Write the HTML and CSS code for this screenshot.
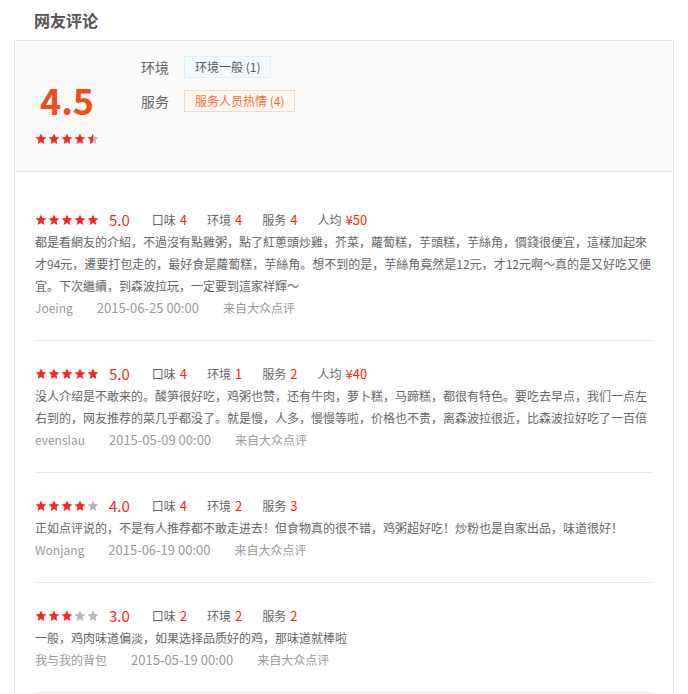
FILE: index.html
```html
<!DOCTYPE html>
<html>
<head>
    <meta charset="UTF-8">
    <title>网友评论</title>
    <link rel="stylesheet" href="styles.css">
</head>
<body>
<div class="comment">
    <h3 class="comment-title">网友评论</h3>
    <div class="comment-box">
        <div class="summary">
            <div class="score">
                <strong>4.5</strong>
                <div class="stars">
                    <svg viewBox="0 0 12 12"><path class="on" d="M6 .6l1.6 3.5 3.8.4-2.9 2.6.8 3.8L6 9 2.7 10.9l.8-3.8L.6 4.5l3.8-.4z"/></svg>
                    <svg viewBox="0 0 12 12"><path class="on" d="M6 .6l1.6 3.5 3.8.4-2.9 2.6.8 3.8L6 9 2.7 10.9l.8-3.8L.6 4.5l3.8-.4z"/></svg>
                    <svg viewBox="0 0 12 12"><path class="on" d="M6 .6l1.6 3.5 3.8.4-2.9 2.6.8 3.8L6 9 2.7 10.9l.8-3.8L.6 4.5l3.8-.4z"/></svg>
                    <svg viewBox="0 0 12 12"><path class="on" d="M6 .6l1.6 3.5 3.8.4-2.9 2.6.8 3.8L6 9 2.7 10.9l.8-3.8L.6 4.5l3.8-.4z"/></svg>
                    <svg viewBox="0 0 12 12">
                        <defs><clipPath id="half"><rect x="0" y="0" width="6" height="12"/></clipPath></defs>
                        <path class="off" d="M6 .6l1.6 3.5 3.8.4-2.9 2.6.8 3.8L6 9 2.7 10.9l.8-3.8L.6 4.5l3.8-.4z"/>
                        <path class="on" clip-path="url(#half)" d="M6 .6l1.6 3.5 3.8.4-2.9 2.6.8 3.8L6 9 2.7 10.9l.8-3.8L.6 4.5l3.8-.4z"/>
                    </svg>
                </div>
            </div>
            <ul class="tags">
                <li><span class="tag-name">环境</span><span class="tag tag-blue">环境一般 (1)</span></li>
                <li><span class="tag-name">服务</span><span class="tag tag-orange">服务人员热情 (4)</span></li>
            </ul>
        </div>

        <ul class="review-list">
            <li class="review">
                <div class="rate">
                    <span class="stars">
                        <svg viewBox="0 0 12 12"><path class="on" d="M6 .6l1.6 3.5 3.8.4-2.9 2.6.8 3.8L6 9 2.7 10.9l.8-3.8L.6 4.5l3.8-.4z"/></svg>
                        <svg viewBox="0 0 12 12"><path class="on" d="M6 .6l1.6 3.5 3.8.4-2.9 2.6.8 3.8L6 9 2.7 10.9l.8-3.8L.6 4.5l3.8-.4z"/></svg>
                        <svg viewBox="0 0 12 12"><path class="on" d="M6 .6l1.6 3.5 3.8.4-2.9 2.6.8 3.8L6 9 2.7 10.9l.8-3.8L.6 4.5l3.8-.4z"/></svg>
                        <svg viewBox="0 0 12 12"><path class="on" d="M6 .6l1.6 3.5 3.8.4-2.9 2.6.8 3.8L6 9 2.7 10.9l.8-3.8L.6 4.5l3.8-.4z"/></svg>
                        <svg viewBox="0 0 12 12"><path class="on" d="M6 .6l1.6 3.5 3.8.4-2.9 2.6.8 3.8L6 9 2.7 10.9l.8-3.8L.6 4.5l3.8-.4z"/></svg>
                    </span>
                    <span class="num">5.0</span>
                    <span class="item">口味<em>4</em></span>
                    <span class="item">环境<em>4</em></span>
                    <span class="item">服务<em>4</em></span>
                    <span class="item">人均<em>¥50</em></span>
                </div>
                <p class="text">都是看網友的介紹，不過沒有點雞粥，點了紅蔥頭炒雞，芥菜，蘿蔔糕，芋頭糕，芋絲角，價錢很便宜，這樣加起來才94元，遷要打包走的，最好食是蘿蔔糕，芋絲角。想不到的是，芋絲角竟然是12元，才12元啊～真的是又好吃又便宜。下次繼續，到森波拉玩，一定要到這家祥輝～</p>
                <div class="meta"><span class="user">Joeing</span><span class="time">2015-06-25 00:00</span><span>来自大众点评</span></div>
            </li>
            <li class="review">
                <div class="rate">
                    <span class="stars">
                        <svg viewBox="0 0 12 12"><path class="on" d="M6 .6l1.6 3.5 3.8.4-2.9 2.6.8 3.8L6 9 2.7 10.9l.8-3.8L.6 4.5l3.8-.4z"/></svg>
                        <svg viewBox="0 0 12 12"><path class="on" d="M6 .6l1.6 3.5 3.8.4-2.9 2.6.8 3.8L6 9 2.7 10.9l.8-3.8L.6 4.5l3.8-.4z"/></svg>
                        <svg viewBox="0 0 12 12"><path class="on" d="M6 .6l1.6 3.5 3.8.4-2.9 2.6.8 3.8L6 9 2.7 10.9l.8-3.8L.6 4.5l3.8-.4z"/></svg>
                        <svg viewBox="0 0 12 12"><path class="on" d="M6 .6l1.6 3.5 3.8.4-2.9 2.6.8 3.8L6 9 2.7 10.9l.8-3.8L.6 4.5l3.8-.4z"/></svg>
                        <svg viewBox="0 0 12 12"><path class="on" d="M6 .6l1.6 3.5 3.8.4-2.9 2.6.8 3.8L6 9 2.7 10.9l.8-3.8L.6 4.5l3.8-.4z"/></svg>
                    </span>
                    <span class="num">5.0</span>
                    <span class="item">口味<em>4</em></span>
                    <span class="item">环境<em>1</em></span>
                    <span class="item">服务<em>2</em></span>
                    <span class="item">人均<em>¥40</em></span>
                </div>
                <p class="text">没人介绍是不敢来的。酸笋很好吃，鸡粥也赞，还有牛肉，萝卜糕，马蹄糕，都很有特色。要吃去早点，我们一点左右到的，网友推荐的菜几乎都没了。就是慢，人多，慢慢等啦，价格也不贵，离森波拉很近，比森波拉好吃了一百倍</p>
                <div class="meta"><span class="user">evenslau</span><span class="time">2015-05-09 00:00</span><span>来自大众点评</span></div>
            </li>
            <li class="review">
                <div class="rate">
                    <span class="stars">
                        <svg viewBox="0 0 12 12"><path class="on" d="M6 .6l1.6 3.5 3.8.4-2.9 2.6.8 3.8L6 9 2.7 10.9l.8-3.8L.6 4.5l3.8-.4z"/></svg>
                        <svg viewBox="0 0 12 12"><path class="on" d="M6 .6l1.6 3.5 3.8.4-2.9 2.6.8 3.8L6 9 2.7 10.9l.8-3.8L.6 4.5l3.8-.4z"/></svg>
                        <svg viewBox="0 0 12 12"><path class="on" d="M6 .6l1.6 3.5 3.8.4-2.9 2.6.8 3.8L6 9 2.7 10.9l.8-3.8L.6 4.5l3.8-.4z"/></svg>
                        <svg viewBox="0 0 12 12"><path class="on" d="M6 .6l1.6 3.5 3.8.4-2.9 2.6.8 3.8L6 9 2.7 10.9l.8-3.8L.6 4.5l3.8-.4z"/></svg>
                        <svg viewBox="0 0 12 12"><path class="off" d="M6 .6l1.6 3.5 3.8.4-2.9 2.6.8 3.8L6 9 2.7 10.9l.8-3.8L.6 4.5l3.8-.4z"/></svg>
                    </span>
                    <span class="num">4.0</span>
                    <span class="item">口味<em>4</em></span>
                    <span class="item">环境<em>2</em></span>
                    <span class="item">服务<em>3</em></span>
                </div>
                <p class="text">正如点评说的，不是有人推荐都不敢走进去！但食物真的很不错，鸡粥超好吃！炒粉也是自家出品，味道很好！</p>
                <div class="meta"><span class="user">Wonjang</span><span class="time">2015-06-19 00:00</span><span>来自大众点评</span></div>
            </li>
            <li class="review">
                <div class="rate">
                    <span class="stars">
                        <svg viewBox="0 0 12 12"><path class="on" d="M6 .6l1.6 3.5 3.8.4-2.9 2.6.8 3.8L6 9 2.7 10.9l.8-3.8L.6 4.5l3.8-.4z"/></svg>
                        <svg viewBox="0 0 12 12"><path class="on" d="M6 .6l1.6 3.5 3.8.4-2.9 2.6.8 3.8L6 9 2.7 10.9l.8-3.8L.6 4.5l3.8-.4z"/></svg>
                        <svg viewBox="0 0 12 12"><path class="on" d="M6 .6l1.6 3.5 3.8.4-2.9 2.6.8 3.8L6 9 2.7 10.9l.8-3.8L.6 4.5l3.8-.4z"/></svg>
                        <svg viewBox="0 0 12 12"><path class="off" d="M6 .6l1.6 3.5 3.8.4-2.9 2.6.8 3.8L6 9 2.7 10.9l.8-3.8L.6 4.5l3.8-.4z"/></svg>
                        <svg viewBox="0 0 12 12"><path class="off" d="M6 .6l1.6 3.5 3.8.4-2.9 2.6.8 3.8L6 9 2.7 10.9l.8-3.8L.6 4.5l3.8-.4z"/></svg>
                    </span>
                    <span class="num">3.0</span>
                    <span class="item">口味<em>2</em></span>
                    <span class="item">环境<em>2</em></span>
                    <span class="item">服务<em>2</em></span>
                </div>
                <p class="text">一般，鸡肉味道偏淡，如果选择品质好的鸡，那味道就棒啦</p>
                <div class="meta"><span class="user">我与我的背包</span><span class="time">2015-05-19 00:00</span><span>来自大众点评</span></div>
            </li>
        </ul>
    </div>
</div>
</body>
</html>
```

FILE: styles.css
```css
* {
    margin: 0;
    padding: 0;
    font-family: "Noto Sans CJK SC", "Liberation Sans", sans-serif;
    font-size: 12px;
    color: #666;
}

ul, li {
    list-style: none;
}

em {
    font-style: normal;
}

.comment {
    margin: 0 14px;
}

.comment-title {
    padding-left: 20px;
    height: 40px;
    line-height: 40px;
    font-size: 16px;
    font-weight: bold;
    color: #555;
}

.comment-box {
    border: 1px solid #e5e5e5;
    border-bottom: 0;
}

/*--顶部总评--*/
.summary {
    display: flex;
    padding: 15px 20px 0;
    height: 115px;
    background: #fafafa;
    border-bottom: 1px solid #e5e5e5;
}

.score {
    width: 64px;
    text-align: center;
}

.score strong {
    display: block;
    margin-top: 18px;
    height: 50px;
    line-height: 50px;
    font-size: 36px;
    font-weight: bold;
    color: #f24c1d;
}

.score .stars {
    margin-top: 9px;
}

.stars {
    display: inline-flex;
    gap: 1px;
    vertical-align: middle;
}

.stars svg {
    width: 12px;
    height: 12px;
}

.stars .on {
    fill: #f52828;
}

.stars .off {
    fill: #b5b5b5;
}

.tags {
    margin-left: 42px;
}

.tags li {
    display: flex;
    align-items: center;
    margin-bottom: 12px;
    height: 22px;
}

.tag-name {
    margin-right: 15px;
    font-size: 14px;
    color: #666;
}

.tag {
    padding: 0 10px;
    height: 20px;
    line-height: 20px;
}

.tag-blue {
    background: #f1fafd;
    border: 1px solid #dcf0f7;
    color: #4a5a66;
}

.tag-orange {
    background: #fff9f5;
    border: 1px solid #ffd7bd;
    color: #ff6a2b;
}

/*--评论列表--*/
.review-list {
    padding: 15px 20px 30px;
}

.review {
    padding: 22px 0 21px;
    border-bottom: 1px solid #e8e8e8;
    line-height: 22px;
}

.rate {
    display: flex;
    align-items: center;
    height: 22px;
}

.rate .num {
    margin: 0 22px 0 10px;
    font-size: 15px;
    color: #f52828;
}

.rate .item {
    margin-right: 20px;
    font-size: 12px;
    color: #666;
}

.rate .item em {
    margin-left: 4px;
    font-size: 13px;
    color: #f20;
}

.text {
    line-height: 22px;
}

.meta span {
    margin-right: 24px;
    color: #999;
}

.meta .time {
    font-size: 13px;
}
```
